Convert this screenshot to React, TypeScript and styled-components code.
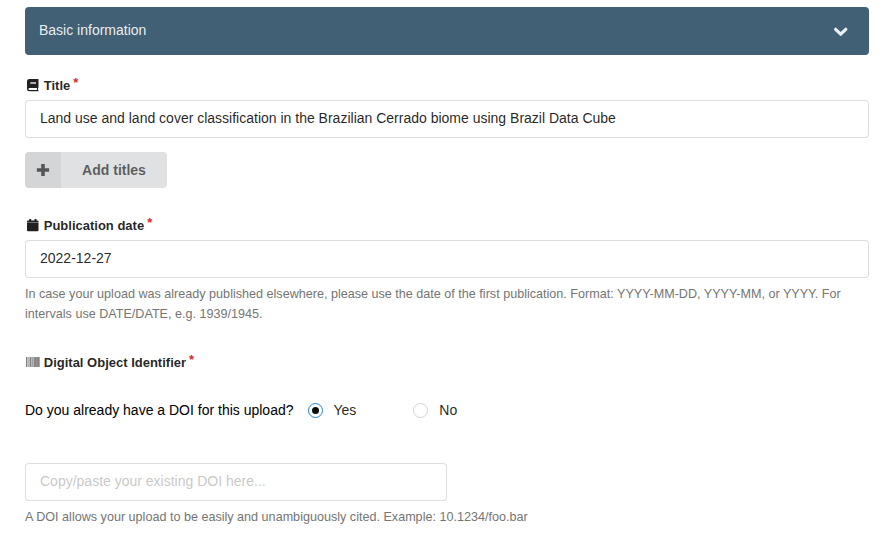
import React, { useState } from "react";
import styled, { createGlobalStyle } from "styled-components";

const GlobalStyle = createGlobalStyle`
  *, *::before, *::after { box-sizing: border-box; }
  body {
    margin: 0;
    background: #fff;
    color: rgba(0, 0, 0, 0.87);
    font-family: "Liberation Sans", Arial, sans-serif;
    font-size: 14px;
    line-height: 20px;
  }
`;

const Form = styled.form`
  display: flex;
  flex-direction: column;
  width: 844px;
  margin: 7px 0 0 25px;
`;

const SectionHeader = styled.header`
  display: flex;
  align-items: center;
  justify-content: space-between;
  height: 48px;
  padding: 0 20px 0 14px;
  border-radius: 4px;
  background: #416076;
  color: rgba(255, 255, 255, 0.9);

  span { margin-top: -2px; }
  svg { display: block; width: 16px; height: 16px; }
`;

const Field = styled.div<{ $gap: number }>`
  display: flex;
  flex-direction: column;
  align-items: flex-start;
  margin-top: ${({ $gap }) => $gap}px;
`;

const Label = styled.label`
  display: flex;
  align-items: center;
  height: 18px;
  margin-bottom: 5px;
  font-size: 13px;
  font-weight: 700;
  line-height: 18px;

  svg { display: block; width: 16px; height: 14px; margin: -2px 2.75px 0 0; }
`;

const Required = styled.span`
  margin: -7px 0 0 3px;
  color: #db2828;
`;

const Input = styled.input<{ $width?: string }>`
  display: block;
  width: ${({ $width = "100%" }) => $width};
  height: 38px;
  padding: 0 14px 2px;
  border: 1px solid rgba(34, 36, 38, 0.15);
  border-radius: 4px;
  outline: none;
  background: #fff;
  color: rgba(0, 0, 0, 0.87);
  font: inherit;

  &::placeholder { color: rgba(191, 191, 191, 0.87); opacity: 1; }
`;

const AddButton = styled.button`
  display: flex;
  width: 142px;
  height: 36px;
  margin-top: 14px;
  padding: 0;
  overflow: hidden;
  border: 0;
  border-radius: 4px;
  background: #e0e1e2;
  color: rgba(0, 0, 0, 0.6);
  font: 700 14px/36px "Liberation Sans", Arial, sans-serif;
`;

const ButtonIcon = styled.span`
  display: flex;
  align-items: center;
  justify-content: center;
  width: 36px;
  height: 36px;
  background: rgba(0, 0, 0, 0.05);

  svg { width: 14px; height: 14px; }
`;

const ButtonText = styled.span`
  flex: 1;
  text-align: center;
`;

const Help = styled.p<{ $gap: number }>`
  margin: ${({ $gap }) => $gap}px 0 0;
  color: #757575;
  font-size: 12.6px;
  line-height: 20px;
`;

const Choices = styled.div`
  display: flex;
  align-items: center;
  height: 20px;
  margin-top: 23px;
  color: #000;
`;

const Choice = styled.label<{ $gap: number }>`
  display: flex;
  align-items: center;
  margin-left: ${({ $gap }) => $gap}px;
  color: rgba(0, 0, 0, 0.87);
`;

const Radio = styled.input`
  appearance: none;
  display: grid;
  place-items: center;
  width: 15px;
  height: 15px;
  margin: 1px 11px 0 0;
  border: 1px solid #d4d4d5;
  border-radius: 50%;
  background: #fff;

  &:checked { border-color: #2185d0; }
  &:checked::before {
    content: "";
    width: 7px;
    height: 7px;
    border-radius: 50%;
    background: rgba(0, 0, 0, 0.95);
  }
`;

const ChevronIcon = () => (
  <svg viewBox="0 0 16 16" fill="none" stroke="currentColor" strokeWidth="3.2" strokeLinecap="round" strokeLinejoin="round">
    <path d="M2.6 6.3 7.7 11.2 12.8 6.3" />
  </svg>
);

const PlusIcon = () => (
  <svg viewBox="0 0 14 14" fill="none" stroke="currentColor" strokeWidth="3.6" strokeLinejoin="round">
    <path d="M7 .9v12.2M.9 7h12.2" />
  </svg>
);

const BookIcon = () => (
  <svg viewBox="0 0 16 14" fill="currentColor">
    <path fillRule="evenodd" d="M4.3 1H13.5V9.6L13 10V12L13.5 12.5V13.3H4.3Q2 13.3 2 11V3.3Q2 1 4.3 1ZM5.5 4V6H11V4ZM4.4 10Q3.5 10 3.5 11T4.4 12H12V10Z" />
    <path d="M5.5 4h5.5v2H5.5z" opacity="0.35" />
  </svg>
);

const CalendarIcon = () => (
  <svg viewBox="0 0 16 14" fill="currentColor">
    <path d="M4.2 1h2v1.5h3.3V1h2v1.5h1q1 0 1 1v1H2v-1q0-1 1-1h1.2zM2 5h11.5v7.3q0 1-1 1H3q-1 0-1-1z" />
    <path d="M2 4.5h11.5V5H2z" opacity="0.5" />
  </svg>
);

const barShades = ["#808080", "#c4c4c4", "#b0b0b0", "#c0c0c0", "#848484", "#b8b8b8", "#a0a0a0", "#b4b4b4", "#888", "#858585", "#929292", "#888", "#858585", "#a8a8a8"];

const BarcodeIcon = () => (
  <svg viewBox="0 0 16 14" shapeRendering="crispEdges">
    {barShades.map((shade, index) => <rect key={index} x={index + 1} y="2" width="1" height="10" fill={shade} />)}
  </svg>
);

export default function App() {
  const [hasDoi, setHasDoi] = useState(true);
  return (
    <>
      <GlobalStyle />
      <Form>
        <SectionHeader><span>Basic information</span><ChevronIcon /></SectionHeader>
        <Field $gap={22}>
          <Label htmlFor="title"><BookIcon />Title<Required>*</Required></Label>
          <Input id="title" defaultValue="Land use and land cover classification in the Brazilian Cerrado biome using Brazil Data Cube" />
          <AddButton type="button"><ButtonIcon><PlusIcon /></ButtonIcon><ButtonText>Add titles</ButtonText></AddButton>
        </Field>
        <Field $gap={29}>
          <Label htmlFor="date"><CalendarIcon />Publication date<Required>*</Required></Label>
          <Input id="date" defaultValue="2022-12-27" />
          <Help $gap={6}>In case your upload was already published elsewhere, please use the date of the first publication. Format: YYYY-MM-DD, YYYY-MM, or YYYY. For intervals use DATE/DATE, e.g. 1939/1945.</Help>
        </Field>
        <Field $gap={30}>
          <Label htmlFor="doi"><BarcodeIcon />Digital Object Identifier<Required>*</Required></Label>
          <Choices>
            <span>Do you already have a DOI for this upload?</span>
            <Choice $gap={14}><Radio type="radio" name="hasDoi" checked={hasDoi} onChange={() => setHasDoi(true)} />Yes</Choice>
            <Choice $gap={57}><Radio type="radio" name="hasDoi" checked={!hasDoi} onChange={() => setHasDoi(false)} />No</Choice>
          </Choices>
        </Field>
        <Field $gap={43}>
          <Input id="doi" $width="422px" placeholder="Copy/paste your existing DOI here..." />
          <Help $gap={6}>A DOI allows your upload to be easily and unambiguously cited. Example: 10.1234/foo.bar</Help>
        </Field>
      </Form>
    </>
  );
}
